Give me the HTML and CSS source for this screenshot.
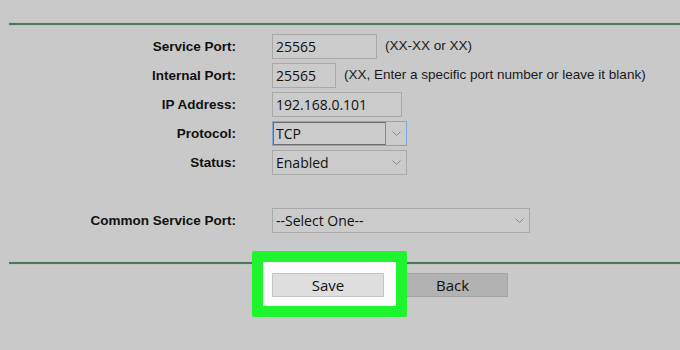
FILE: index.html
```html
<!DOCTYPE html>
<html>
<head>
<meta charset="utf-8">
<link rel="stylesheet" href="styles.css">
</head>
<body>
<div class="page">
  <div class="rule rule-top"></div>
  <div class="form">
    <div class="label">Service Port:</div>
    <div class="field"><div class="input w-service">25565</div><span class="hint">(XX-XX or XX)</span></div>

    <div class="label">Internal Port:</div>
    <div class="field"><div class="input w-internal">25565</div><span class="hint hint-tight">(XX, Enter a specific port number or leave it blank)</span></div>

    <div class="label">IP Address:</div>
    <div class="field"><div class="input w-ip">192.168.0.101</div></div>

    <div class="label">Protocol:</div>
    <div class="field">
      <div class="select select-focus w-select">
        <span class="select-value">TCP</span>
        <span class="chevron"><svg width="9" height="5" viewBox="0 0 9 5"><path d="M0.5 0.5 L4.5 4.5 L8.5 0.5" fill="none" stroke="#8a8a8a" stroke-width="1"/></svg></span>
      </div>
    </div>

    <div class="label">Status:</div>
    <div class="field">
      <div class="select w-select">
        <span class="select-value">Enabled</span>
        <span class="chevron"><svg width="9" height="5" viewBox="0 0 9 5"><path d="M0.5 0.5 L4.5 4.5 L8.5 0.5" fill="none" stroke="#8a8a8a" stroke-width="1"/></svg></span>
      </div>
    </div>

    <div class="label label-common">Common Service Port:</div>
    <div class="field field-common">
      <div class="select w-common">
        <span class="select-value">--Select One--</span>
        <span class="chevron"><svg width="9" height="5" viewBox="0 0 9 5"><path d="M0.5 0.5 L4.5 4.5 L8.5 0.5" fill="none" stroke="#8a8a8a" stroke-width="1"/></svg></span>
      </div>
    </div>
  </div>
  <div class="rule rule-bottom"></div>
  <div class="buttons">
    <div class="highlight"><button class="btn btn-save">Save</button></div>
    <button class="btn btn-back">Back</button>
  </div>
</div>
</body>
</html>
```
FILE: styles.css
```css
html, body {
  margin: 0;
  padding: 0;
  background: #c9c9c9;
}
.page {
  width: 680px;
  height: 350px;
  overflow: hidden;
  padding-top: 23px;
  box-sizing: border-box;
}
.rule {
  margin-left: 9px;
  height: 2px;
  background: #467b5c;
  box-shadow: 0 0 1px #6f9a80;
}
.form {
  display: grid;
  grid-template-columns: 236px auto;
  column-gap: 36px;
  row-gap: 4px;
  margin-top: 9px;
  align-items: center;
}
.label {
  font-family: "Liberation Sans", Arial, sans-serif;
  font-weight: bold;
  font-size: 13.5px;
  color: #111;
  text-align: right;
}
.label-common {
  margin-top: 29px;
}
.field {
  display: flex;
  align-items: center;
  height: 25px;
}
.field-common {
  margin-top: 29px;
}
.input, .select {
  box-sizing: border-box;
  height: 25px;
  border: 1px solid #a9a9a9;
  background: #cbcbcb;
  font-family: "Open Sans", sans-serif;
  font-size: 14px;
  color: #111;
  display: flex;
  align-items: center;
  padding-left: 3px;
}
.w-service { width: 105px; }
.w-internal { width: 64px; }
.w-ip { width: 130px; }
.w-select { width: 135px; }
.w-common { width: 258px; }
.hint {
  font-family: "Liberation Sans", Arial, sans-serif;
  font-size: 13.5px;
  color: #1a1a1a;
  margin-left: 8px;
  margin-top: -3px;
}
.hint-tight {
  margin-left: 8px;
}
.select {
  justify-content: space-between;
  padding-right: 0;
}
.select-value {
  flex: 1;
}
.chevron {
  width: 20px;
  display: flex;
  justify-content: center;
  align-items: center;
  height: 100%;
}
.select-focus {
  border-color: #7ea6d6;
  padding: 0;
}
.select-focus .select-value {
  height: 100%;
  box-sizing: border-box;
  border: 1px solid #6d6d6d;
  border-right-color: #8a8a8a;
  display: flex;
  align-items: center;
  padding-left: 2px;
}
.rule-bottom {
  margin-top: 29px;
}
.buttons {
  display: flex;
  gap: 21px;
  margin-top: 9px;
  padding-left: 272px;
}
.highlight {
  position: relative;
  display: flex;
}
.highlight::before {
  content: "";
  position: absolute;
  left: -20px;
  top: -22px;
  right: -23px;
  bottom: -20px;
  background: #fcfcfc;
  border: 11px solid #1ff52f;
  border-radius: 2px;
  z-index: 0;
}
.btn {
  box-sizing: border-box;
  height: 24px;
  font-family: "Open Sans", sans-serif;
  font-size: 15px;
  color: #111;
  padding: 0;
  margin: 0;
  display: flex;
  align-items: center;
  justify-content: center;
}
.btn-save {
  position: relative;
  z-index: 1;
  width: 112px;
  background: #dedede;
  border: 1px solid #c3c3c3;
}
.btn-back {
  width: 103px;
  padding-right: 8px;
  background: #b2b2b2;
  border: 1px solid #a3a3a3;
}
```
